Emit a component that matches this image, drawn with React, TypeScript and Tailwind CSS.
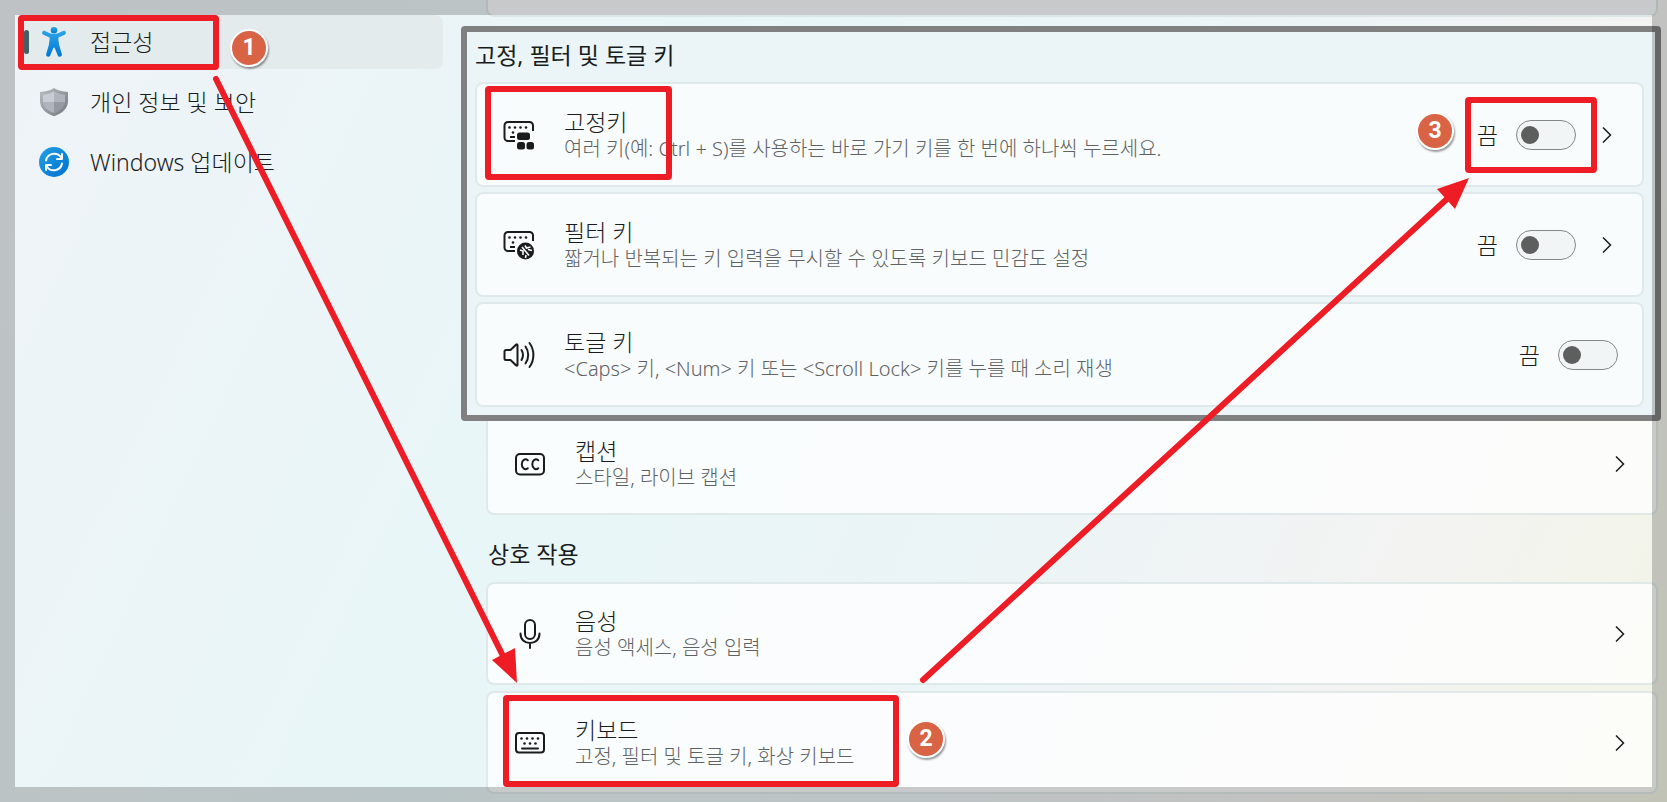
import type { ReactNode } from "react";

type IconProps = { className?: string };

function AccessibilityIcon() {
    return (
        <svg viewBox="0 0 30 32" className="w-[30px] h-8 shrink-0" aria-hidden="true">
            <defs>
                <linearGradient id="person" x1="0" y1="0" x2="0" y2="1">
                    <stop offset="0" stopColor="#2aa5e6" />
                    <stop offset="1" stopColor="#0276d3" />
                </linearGradient>
            </defs>
            <g fill="url(#person)">
                <circle cx="15" cy="4.3" r="3.3" />
                <path d="M3.2 6.200c.5-1.300 1.700-1.600 2.800-1.100 2.800 1.400 5.600 3 9 3s6.200-1.600 9-3c1.100-.5 2.300-.2 2.800 1.100.4 1.200-.2 2-1.200 2.500L20 11.300c-.6.300-.8.800-.7 1.500l.8 6 2.700 9.200c.3 1.200-.2 2.200-1.300 2.600-1.200.4-2.200-.1-2.700-1.200L15.700 22c-.3-.8-1.100-.8-1.400 0l-3.100 7.400c-.5 1.100-1.500 1.600-2.700 1.200-1.100-.4-1.600-1.400-1.300-2.600l2.700-9.200.8-6c.1-.7-.1-1.200-.7-1.500L4.400 8.700c-1-.5-1.600-1.300-1.200-2.500z" />
            </g>
        </svg>
    );
}

function ShieldIcon() {
    return (
        <svg viewBox="0 0 30 30" className="size-[30px] shrink-0" aria-hidden="true">
            <defs>
                <linearGradient id="shield" x1="0" y1="0" x2="1" y2="1">
                    <stop offset="0" stopColor="#b9bec4" />
                    <stop offset="1" stopColor="#72777e" />
                </linearGradient>
            </defs>
            <path d="M15 1c4 2.600 8.500 3.700 14 3.900V14c0 7-5 12.200-14 15.200C6 26.200 1 21 1 14V4.900C6.500 4.700 11 3.600 15 1z" fill="url(#shield)" />
            <path d="M15 4.500c-3.600 2-7 2.900-11 3.200V15h11z" fill="#c8ccd4" />
            <path d="M15 4.500c3.600 2 7 2.900 11 3.200V15H15z" fill="#b0b4bd" />
            <path d="M4 15h11v11C8 23.500 4.300 20 4 15z" fill="#b0b4bd" />
            <path d="M26 15H15v11c7-2.500 10.700-6 11-11z" fill="#9599a3" />
        </svg>
    );
}

function UpdateIcon() {
    return (
        <svg viewBox="0 0 30 30" className="size-[30px] shrink-0" fill="none" aria-hidden="true">
            <defs>
                <linearGradient id="update" x1="0" y1="0" x2="1" y2="1">
                    <stop offset="0" stopColor="#22a2e5" />
                    <stop offset="1" stopColor="#0070d0" />
                </linearGradient>
            </defs>
            <circle cx="15" cy="15" r="15" fill="url(#update)" />
            <g stroke="#fff" strokeWidth="2" strokeLinecap="round" strokeLinejoin="round">
                <path d="M7 13.500a8.300 8.300 0 0 1 15-3.200M23 7v5h-5" />
                <path d="M23 16.500a8.300 8.300 0 0 1-15 3.200M7 23v-5h5" />
            </g>
        </svg>
    );
}

const keyDots = (
    <g fill="currentColor" stroke="none">
        <circle cx="6.5" cy="7.5" r="1.3" />
        <circle cx="12" cy="7.5" r="1.3" />
        <circle cx="17.5" cy="7.5" r="1.3" />
        <circle cx="23" cy="7.5" r="1.3" />
        <circle cx="10" cy="12.5" r="1.3" />
    </g>
);

function StickyKeysIcon({ className }: IconProps) {
    return (
        <svg viewBox="0 0 32 30" className={className} fill="none" stroke="currentColor" strokeWidth="2" aria-hidden="true">
            <path d="M12 21H5a3.500 3.500 0 0 1-3.500-3.500v-12A3.500 3.500 0 0 1 5 2h21.500A3.500 3.500 0 0 1 30 5.500V11M7 17h5" />
            {keyDots}
            <g fill="currentColor" stroke="none">
                <rect x="14" y="12.5" width="13" height="7.5" rx="2.5" />
                <rect x="14" y="22" width="8" height="7.5" rx="2.5" />
                <rect x="23.5" y="22" width="7.5" height="7.5" rx="2.5" />
            </g>
        </svg>
    );
}

function FilterKeysIcon({ className }: IconProps) {
    return (
        <svg viewBox="0 0 32 30" className={className} fill="none" stroke="currentColor" strokeWidth="2" aria-hidden="true">
            <path d="M12 21H5a3.500 3.500 0 0 1-3.500-3.500v-12A3.500 3.500 0 0 1 5 2h21.500A3.500 3.500 0 0 1 30 5.500V11M7 17h5" />
            {keyDots}
            <circle cx="22.5" cy="21" r="8.5" fill="currentColor" stroke="none" />
            <g stroke="#f9fcfd" strokeWidth="1.6">
                <path d="M17 20l3 1v4M19 17l7 8.500M22 15.500l1.500 2.500 4-1M25 19.500l4 1M23 25l-.5 3" />
            </g>
        </svg>
    );
}

function SpeakerIcon({ className }: IconProps) {
    return (
        <svg viewBox="0 0 32 30" className={className} fill="none" stroke="currentColor" strokeWidth="2" strokeLinecap="round" strokeLinejoin="round" aria-hidden="true">
            <path d="M1.500 11.500A1.500 1.500 0 0 1 3 10h4.500l5.700-5.500c.6-.5 1.300-.2 1.300.6v19.800c0 .8-.7 1.100-1.300.6L7.500 20H3a1.500 1.500 0 0 1-1.500-1.500z" />
            <path d="M18.500 10c1.800 3 1.800 7 0 10M22.500 6.500c3.600 5 3.600 12 0 17M26.500 3c5.200 7 5.200 17 0 24" />
        </svg>
    );
}

function CaptionsIcon({ className }: IconProps) {
    return (
        <svg viewBox="0 0 32 30" className={className} fill="none" stroke="currentColor" strokeWidth="2" strokeLinecap="round" aria-hidden="true">
            <rect x="2" y="5" width="28" height="20.5" rx="4" />
            <path d="M13.800 11.300c-2.600-2.100-6-.5-6 4s3.400 6 6 3.900M24.300 11.300c-2.600-2.100-6-.5-6 4s3.400 6 6 3.900" />
        </svg>
    );
}

function MicIcon({ className }: IconProps) {
    return (
        <svg viewBox="0 0 32 30" className={className} fill="none" stroke="currentColor" strokeWidth="2" strokeLinecap="round" aria-hidden="true">
            <rect x="11" y="1" width="10" height="19" rx="5" />
            <path d="M6.500 14.500c0 6 4 9.500 9.500 9.500s9.500-3.500 9.500-9.500M16 24v5" />
        </svg>
    );
}

function KeyboardIcon({ className }: IconProps) {
    return (
        <svg viewBox="0 0 32 30" className={className} fill="none" stroke="currentColor" strokeWidth="2" strokeLinecap="round" aria-hidden="true">
            <rect x="2" y="5" width="28" height="19.5" rx="3" />
            <g fill="currentColor" stroke="none">
                <circle cx="7.5" cy="10.5" r="1.3" />
                <circle cx="13" cy="10.5" r="1.3" />
                <circle cx="18.5" cy="10.5" r="1.3" />
                <circle cx="24" cy="10.5" r="1.3" />
                <circle cx="10.5" cy="15.5" r="1.3" />
                <circle cx="16" cy="15.5" r="1.3" />
                <circle cx="21.5" cy="15.5" r="1.3" />
            </g>
            <path d="M8 20.500h16" />
        </svg>
    );
}

function Chevron() {
    return (
        <svg viewBox="0 0 10 16" className="w-[10px] h-4 shrink-0" fill="none" stroke="currentColor" strokeWidth="1.5" aria-hidden="true">
            <path d="M1 .5L8.500 8 1 15.500" />
        </svg>
    );
}

function Toggle({ label }: { label: string }) {
    return (
        <label className="flex items-center gap-[18px] text-[23px] leading-7">
            <span>끔</span>
            <span className="flex items-center w-15 h-[30px] rounded-full border border-[#858787] bg-[#f2f5f6] px-1 has-checked:justify-end">
                <input type="checkbox" role="switch" aria-label={label} className="appearance-none size-[18px] rounded-full bg-[#5d5f5f]" />
            </span>
        </label>
    );
}

type SettingRowProps = {
    icon: ReactNode;
    title: string;
    description: string;
    className: string;
    children?: ReactNode;
};

function SettingRow({ icon, title, description, className, children }: SettingRowProps) {
    return (
        <div className={`relative flex items-center rounded-lg border-2 pl-[26px] ${className}`}>
            {icon}
            <div className="flex-1 min-w-0 pl-[29px]">
                <p className="text-[23px] leading-7">{title}</p>
                <p className="text-[20px] leading-[26px] text-[#5f6263]">{description}</p>
            </div>
            {children}
        </div>
    );
}

function StepBadge({ step, className }: { step: number; className: string }) {
    return (
        <span className={`absolute flex items-center justify-center size-[38px] rounded-full border-2 border-white bg-[#d96445] text-white text-[23px] font-bold font-['Roboto',sans-serif] shadow-[1px_2px_2px_rgba(0,0,0,0.4)] ${className}`}>
            {step}
        </span>
    );
}

const iconSize = "w-8 h-[30px] shrink-0";
const panelCard = "h-[105px] border-[#dfe9eb] bg-[#f9fcfd] pr-6";
const pageCard = "h-[103px] border-[#dce6e6]/80 bg-white/75 bg-clip-padding pr-[31px]";
const mark = "absolute border-6 border-[#ee1c25] rounded-sm pointer-events-none";

export default function App() {
    return (
        <div className="relative flex w-full h-screen overflow-hidden text-[#1a1c1c] font-light font-['Noto_Sans','Noto_Sans_CJK_KR',sans-serif] bg-[linear-gradient(115deg,#eff3f7_0%,#e8f6f8_38%,#ebf4f6_60%,#f3f3f2_82%,#f2f4e4_100%)]">
            <nav className="w-[461px] shrink-0 pt-[15px] pl-[22px] pr-[18px]">
                <ul className="flex flex-col gap-[6px] text-[23px] leading-7">
                    <li>
                        <a href="#accessibility" className="relative flex items-center h-[54px] rounded-lg bg-[#e4ebed] gap-[21px] pl-[17px]">
                            <span className="absolute left-[2px] w-[5px] h-6 rounded-full bg-[#416066]" />
                            <AccessibilityIcon />
                            접근성
                            <span className={`${mark} -left-[4px] top-0 w-[201px] h-[55px]`} />
                            <StepBadge step={1} className="left-[208px] top-[14px]" />
                        </a>
                    </li>
                    <li>
                        <a href="#privacy" className="flex items-center h-[54px] gap-[21px] pl-[17px]">
                            <ShieldIcon />
                            개인 정보 및 보안
                        </a>
                    </li>
                    <li>
                        <a href="#update" className="flex items-center h-[54px] gap-[21px] pl-[17px]">
                            <UpdateIcon />
                            Windows 업데이트
                        </a>
                    </li>
                </ul>
            </nav>

            <main className="flex-1 min-w-0">
                <div className="h-[17px] ml-[25px] mr-[9px] rounded-b-lg border-2 border-t-0 border-[#dce6e6] bg-[#f9fcfd]" />

                <section className="relative z-10 mt-[9px] mr-[6px] h-[395px] rounded-sm border-6 border-[#808080] bg-[#ebf5f8] pl-2 pr-[11px]">
                    <h2 className="h-[50px] pt-2 text-[23px] leading-[30px] font-normal">고정, 필터 및 토글 키</h2>
                    <div className="flex flex-col gap-[5px]">
                        <SettingRow icon={<StickyKeysIcon className={iconSize} />} title="고정키" description="여러 키(예: Ctrl + S)를 사용하는 바로 가기 키를 한 번에 하나씩 누르세요." className={panelCard}>
                            <Toggle label="고정키" />
                            <span className="pl-[26px] pr-[6px]"><Chevron /></span>
                            <span className={`${mark} left-[8px] top-[2px] w-[187px] h-[94px]`} />
                            <span className={`${mark} right-[45px] top-[13px] w-[132px] h-[76px]`} />
                            <StepBadge step={3} className="right-[188px] top-[28px]" />
                        </SettingRow>
                        <SettingRow icon={<FilterKeysIcon className={iconSize} />} title="필터 키" description="짧거나 반복되는 키 입력을 무시할 수 있도록 키보드 민감도 설정" className={panelCard}>
                            <Toggle label="필터 키" />
                            <span className="pl-[26px] pr-[6px]"><Chevron /></span>
                        </SettingRow>
                        <SettingRow icon={<SpeakerIcon className={iconSize} />} title="토글 키" description="<Caps> 키, <Num> 키 또는 <Scroll Lock> 키를 누를 때 소리 재생" className={panelCard}>
                            <Toggle label="토글 키" />
                        </SettingRow>
                    </div>
                </section>

                <div className="-mt-[9px] ml-[25px] mr-[9px]">
                    <SettingRow icon={<CaptionsIcon className={iconSize} />} title="캡션" description="스타일, 라이브 캡션" className={pageCard}>
                        <Chevron />
                    </SettingRow>
                    <h2 className="h-[67px] pt-6 pl-[2px] text-[23px] leading-[30px] font-normal">상호 작용</h2>
                    <div className="flex flex-col gap-[6px]">
                        <SettingRow icon={<MicIcon className={iconSize} />} title="음성" description="음성 액세스, 음성 입력" className={pageCard}>
                            <Chevron />
                        </SettingRow>
                        <SettingRow icon={<KeyboardIcon className={iconSize} />} title="키보드" description="고정, 필터 및 토글 키, 화상 키보드" className={pageCard}>
                            <Chevron />
                            <span className={`${mark} left-[15px] top-[2px] w-[396px] h-[92px]`} />
                            <StepBadge step={2} className="left-[419px] top-[27px]" />
                        </SettingRow>
                    </div>
                </div>
            </main>

            {/* dimmed edge around the window */}
            <div className="absolute inset-0 z-20 border-15 border-black/20 pointer-events-none" />

            {/* arrows between the steps */}
            <svg viewBox="0 0 1667 802" preserveAspectRatio="none" className="absolute inset-0 z-20 size-full pointer-events-none" fill="#ee1c25" stroke="none" aria-hidden="true">
                <g stroke="#ee1c25" strokeWidth="6" strokeLinecap="round">
                    <path d="M216 79L504 658" />
                    <path d="M923 680L1448 198" />
                </g>
                <path d="M517 683L492 660l23-12z" />
                <path d="M1469 178l-14 31-18-20z" />
            </svg>
        </div>
    );
}
